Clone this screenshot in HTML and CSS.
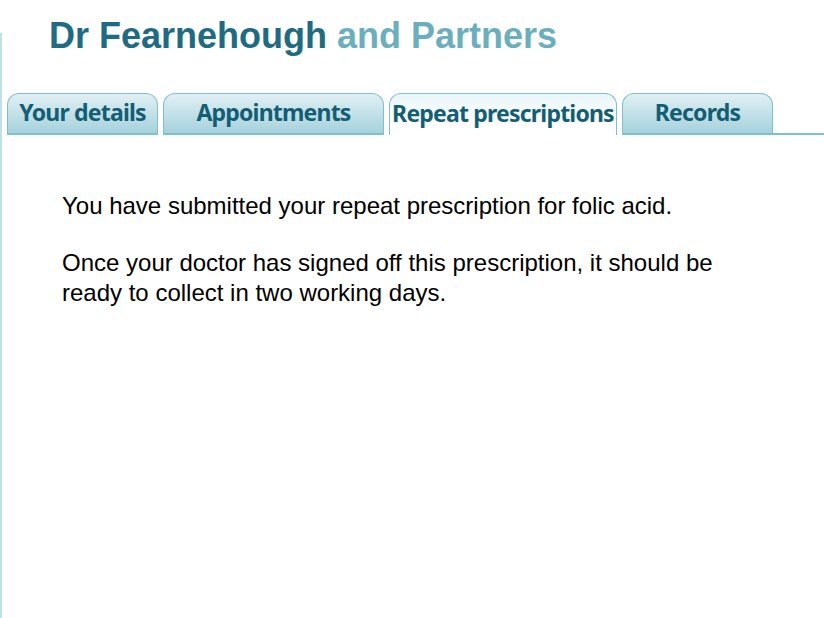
FILE: index.html
```html
<!DOCTYPE html>
<html>
<head>
<meta charset="utf-8">
<link rel="stylesheet" href="styles.css">
</head>
<body>
<div class="page">
  <h1 class="title"><span class="dr">Dr Fearnehough</span> <span class="partners">and Partners</span></h1>
  <div class="frame">
    <nav class="tabs">
      <div class="tab t1">Your details</div>
      <div class="tab t2">Appointments</div>
      <div class="tab t3 active">Repeat prescriptions</div>
      <div class="tab t4">Records</div>
      <div class="fill"></div>
    </nav>
    <main class="content">
      <p>You have submitted your repeat prescription for folic acid.</p>
      <p>Once your doctor has signed off this prescription, it should be<br>ready to collect in two working days.</p>
    </main>
  </div>
</div>
</body>
</html>
```

FILE: styles.css
```css
html, body {
  margin: 0;
  padding: 0;
  background: #fff;
}
.page {
  width: 824px;
  height: 618px;
  overflow: hidden;
  position: relative;
}
.title {
  margin: 0;
  padding: 16px 0 0 49px;
  height: 17px;
  font-family: "Liberation Sans", Arial, sans-serif;
  font-weight: bold;
  font-size: 36px;
  line-height: 40px;
  white-space: nowrap;
  position: relative;
  z-index: 2;
}
.dr { color: #1e6b83; }
.partners { color: #6bafbe; }
.frame {
  border-left: 2px solid #bfe0e8;
  height: 585px;
  display: flex;
  flex-direction: column;
}
.tabs {
  display: flex;
  align-items: flex-end;
  padding-top: 58px;
  padding-left: 5px;
  gap: 5px;
  height: 44px;
}
.tab {
  height: 42px;
  box-sizing: border-box;
  border: 1px solid #80bfcd;
  border-bottom: 2px solid #80bfcd;
  border-radius: 12px 12px 0 0;
  background: linear-gradient(#e0f0f4, #a6d2dc);
  color: #135e75;
  font-family: "Noto Sans", "Open Sans", sans-serif;
  font-weight: bold;
  font-size: 23px;
  letter-spacing: -0.8px;
  display: flex;
  align-items: center;
  justify-content: center;
  padding-bottom: 3px;
}
.t1 { width: 151px; }
.t2 { width: 221px; }
.t3 { width: 228px; }
.t4 { width: 151px; }
.tab.active {
  background: linear-gradient(#e8f5f8, #ffffff 70%);
  border-bottom: none;
  height: 42px;
  padding-bottom: 4px;
}
.fill {
  flex: 1;
  border-bottom: 2px solid #80bfcd;
  margin-left: -5px;
}
.content {
  padding: 56px 0 0 60px;
  font-family: "Liberation Sans", Arial, sans-serif;
  font-size: 24px;
  line-height: 30px;
  color: #000;
}
.content p {
  margin: 0 0 27px 0;
}
```
